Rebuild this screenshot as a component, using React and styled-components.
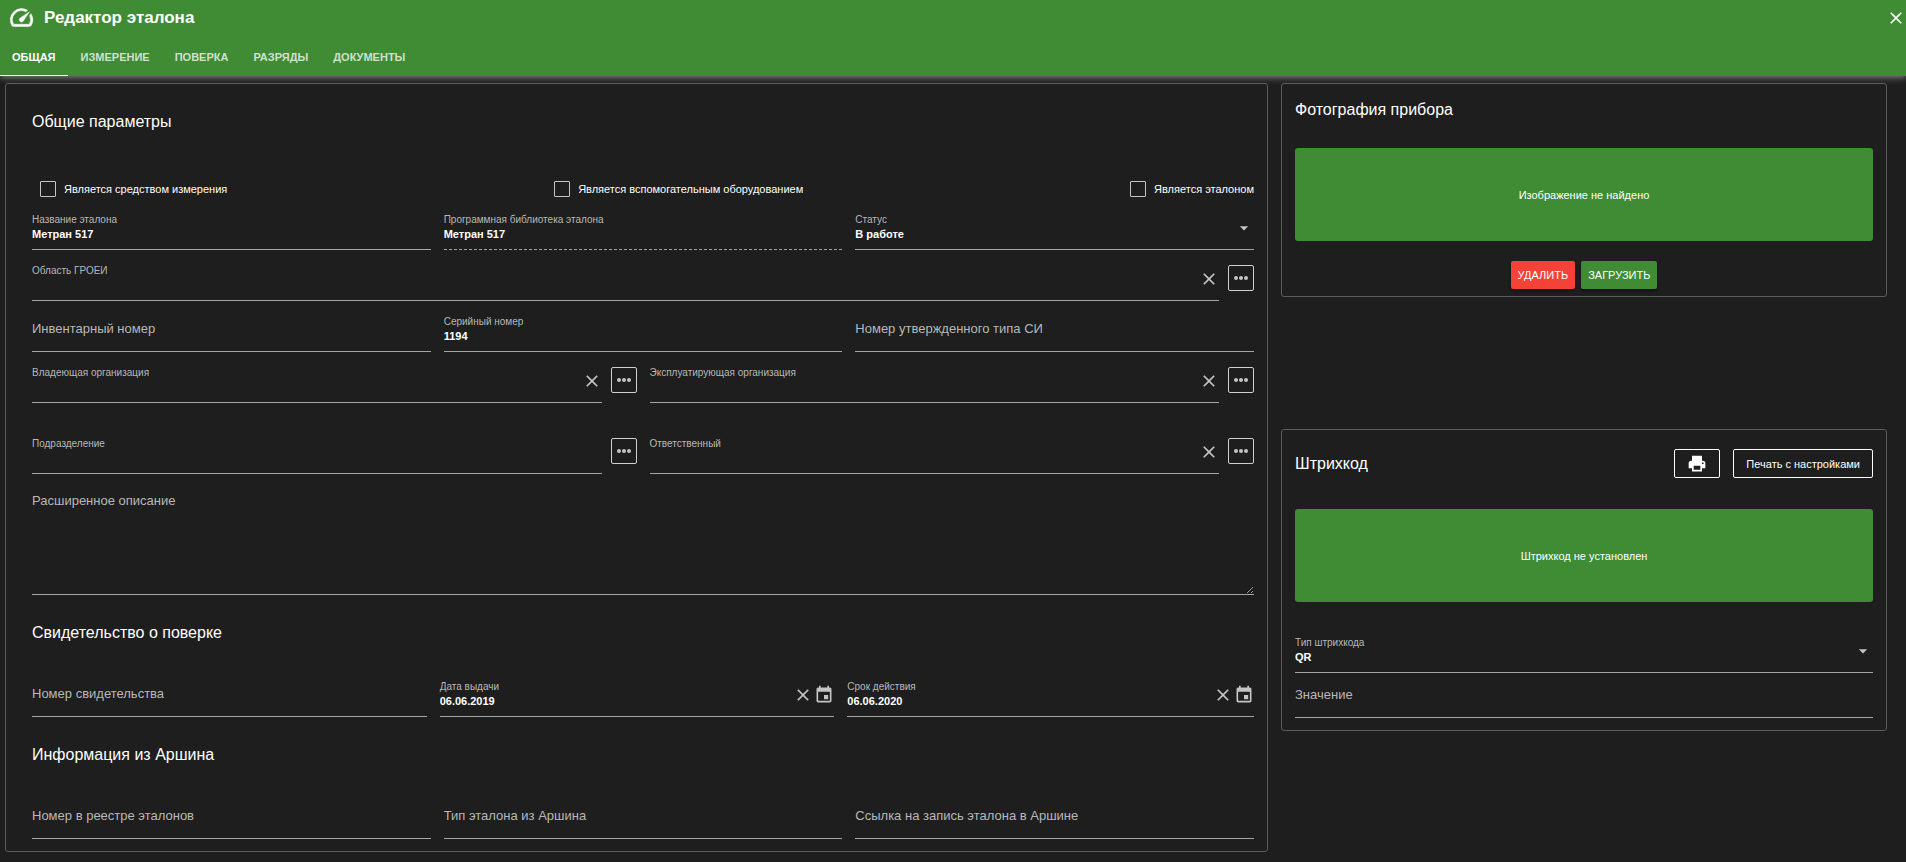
import React from 'react';
import styled, { createGlobalStyle, css } from 'styled-components';
import { MdArrowDropDown, MdClose, MdEvent } from 'react-icons/md';

const GlobalStyle = createGlobalStyle`
  *, *::before, *::after {
    box-sizing: border-box;
  }

  body {
    margin: 0;
    background: #1e1e1e;
    color: #fff;
    font-family: 'Liberation Sans', Arial, sans-serif;
    font-size: 11px;
  }

  button, input, select, textarea {
    font: inherit;
    color: inherit;
  }
`;

const Header = styled.header`
  position: relative;
  background: #3f8c35;
  box-shadow:
    0 2px 4px -1px rgba(255, 255, 255, 0.2),
    0 4px 5px 0 rgba(255, 255, 255, 0.14),
    0 1px 10px 0 rgba(255, 255, 255, 0.12);
`;

const TitleBar = styled.div`
  display: flex;
  align-items: center;
  gap: 9px;
  height: 38px;
  padding: 0 0 3px 8px;
`;

const Title = styled.h1`
  flex: 1;
  margin: 0;
  font-size: 17px;
  font-weight: 700;
`;

const IconButton = styled.button`
  display: flex;
  padding: 0;
  border: 0;
  background: none;
  color: ${(props) => props.$color || '#c4c4c4'};
  cursor: pointer;
`;

const Tabs = styled.nav`
  display: flex;
  gap: 1px;
`;

const Tab = styled.button`
  height: 38px;
  padding: 0 12px;
  border: 0;
  border-bottom: 1px solid ${(props) => (props.$active ? '#fff' : 'transparent')};
  background: none;
  color: ${(props) => (props.$active ? '#fff' : 'rgba(255, 255, 255, 0.75)')};
  font-weight: 700;
  text-transform: uppercase;
  cursor: pointer;
`;

const Content = styled.main`
  display: grid;
  grid-template-columns: 1263fr 606fr;
  align-items: start;
  gap: 13px;
  padding: 7px 19px 9px 5px;
`;

const Card = styled.section`
  border: 1px solid #5c5c5c;
  border-radius: 3px;
  padding: ${(props) => props.$padding};
`;

const Sidebar = styled.div`
  display: flex;
  flex-direction: column;
  gap: 132px;
`;

const Heading = styled.h2`
  margin: ${(props) => props.$margin || '0'};
  font-size: 16px;
  font-weight: 400;
  line-height: 24px;
`;

const Checks = styled.div`
  display: flex;
  justify-content: space-between;
  margin-bottom: 17px;
`;

const CheckLabel = styled.label`
  display: flex;
  align-items: center;
  gap: 8px;
  padding-left: 8px;
  line-height: 16px;
`;

const CheckBox = styled.input`
  appearance: none;
  width: 16px;
  height: 16px;
  margin: 0;
  border: 1px solid #c4c4c4;
  border-radius: 1px;
`;

const Rows = styled.div`
  display: flex;
  flex-direction: column;
  gap: 15px;
`;

const Row = styled.div`
  display: grid;
  grid-template-columns: ${(props) => props.$columns || '1fr'};
  gap: 9px 13px;
  margin-top: ${(props) => props.$offset || '0'};
`;

const Lookup = styled.div`
  display: flex;
  align-items: flex-start;
  gap: 9px;
`;

const FieldBox = styled.div`
  display: grid;
  flex: 1;
  min-width: 0;
  margin-top: ${(props) => props.$offset || '0'};

  > * {
    grid-area: 1 / 1;
  }
`;

const FieldLabel = styled.label`
  align-self: start;
  justify-self: start;
  color: #b8b8b8;
  pointer-events: none;
  ${(props) =>
    props.$raised
      ? css`
          font-size: 10px;
          line-height: 12px;
        `
      : css`
          padding-top: 2px;
          font-size: 13px;
          line-height: 22px;
        `}
`;

const control = css`
  width: 100%;
  height: 36px;
  margin: 0;
  padding: 12px 0 7px;
  border: 0;
  border-bottom: 1px ${(props) => (props.$dashed ? 'dashed' : 'solid')} #a6a6a6;
  border-radius: 0;
  outline: 0;
  background: none;
  font-weight: 700;
  line-height: 16px;
`;

const Input = styled.input`
  ${control}
`;

const Select = styled.select`
  ${control}
  appearance: none;

  option {
    background: #1e1e1e;
  }
`;

const TextArea = styled.textarea`
  ${control}
  display: block;
  height: 107px;
  padding-top: 26px;
  resize: vertical;
`;

const FieldIcons = styled.div`
  display: flex;
  align-self: start;
  justify-self: end;
  gap: 1px;
  padding-top: 4px;
  color: #c4c4c4;
  pointer-events: ${(props) => (props.$passive ? 'none' : 'auto')};
`;

const MoreButton = styled.button`
  display: flex;
  align-items: center;
  justify-content: center;
  width: 26px;
  height: 26px;
  padding: 0;
  border: 1px solid #d0d0d0;
  border-radius: 2px;
  background: none;
  color: #c4c4c4;
  cursor: pointer;
`;

const Placeholder = styled.div`
  display: flex;
  align-items: center;
  justify-content: center;
  height: 93px;
  border-radius: 3px;
  background: #3f8c35;
`;

const Actions = styled.div`
  display: flex;
  justify-content: center;
  gap: ${(props) => props.$gap || '6px'};
`;

const FilledButton = styled.button`
  height: 28px;
  padding: 0 7px;
  border: 0;
  border-radius: 2px;
  background: ${(props) => props.$color};
  box-shadow: 0 2px 3px rgba(0, 0, 0, 0.4);
  text-transform: uppercase;
  cursor: pointer;
`;

const OutlinedButton = styled.button`
  display: flex;
  align-items: center;
  height: 29px;
  padding: 0 12px;
  border: 1px solid #fff;
  border-radius: 2px;
  background: none;
  cursor: pointer;
`;

const CardHeader = styled.div`
  display: flex;
  align-items: center;
  justify-content: space-between;
  margin-bottom: 31px;
`;

const GaugeIcon = () => (
  <svg
    width="27"
    height="27"
    viewBox="0 0 24 24"
    fill="currentColor"
    stroke="currentColor"
    strokeWidth="0.4"
    aria-hidden="true"
  >
    <path d="m20.38 8.57-1.23 1.85a8 8 0 0 1-.22 7.58H5.07A8 8 0 0 1 15.58 6.85l1.85-1.23A10 10 0 0 0 3.35 19a2 2 0 0 0 1.72 1h13.85a2 2 0 0 0 1.74-1 10 10 0 0 0-.27-10.44z" />
    <path d="M10.59 15.41a2 2 0 0 0 2.83 0l5.66-8.49-8.49 5.66a2 2 0 0 0 0 2.83z" />
  </svg>
);

const MoreIcon = () => (
  <svg width="20" height="20" viewBox="0 0 20 20" fill="currentColor" aria-hidden="true">
    <circle cx="5" cy="10" r="2" />
    <circle cx="10" cy="10" r="2" />
    <circle cx="15" cy="10" r="2" />
  </svg>
);

const PrinterIcon = () => (
  <svg width="20" height="20" viewBox="0 0 24 24" fill="currentColor" aria-hidden="true">
    <path
      fillRule="evenodd"
      d="M6 2h12v6h1a3 3 0 0 1 3 3v6h-4v4H6v-4H2v-6a3 3 0 0 1 3-3h1V2zm2 12v5h8v-5H8zm10-3a1 1 0 1 0 2 0 1 1 0 0 0-2 0z"
    />
  </svg>
);

const Field = ({ id, label, value, raised, dashed, clearable, date }) => (
  <FieldBox>
    <Input id={id} defaultValue={value} $dashed={dashed} readOnly={dashed} />
    <FieldLabel htmlFor={id} $raised={raised || Boolean(value)}>
      {label}
    </FieldLabel>
    {(clearable || date) && (
      <FieldIcons>
        <IconButton type="button" aria-label="Очистить">
          <MdClose size={20} />
        </IconButton>
        {date && (
          <IconButton type="button" aria-label="Открыть календарь">
            <MdEvent size={20} />
          </IconButton>
        )}
      </FieldIcons>
    )}
  </FieldBox>
);

const LookupField = (props) => (
  <Lookup>
    <Field raised {...props} />
    <MoreButton type="button" aria-label="Выбрать">
      <MoreIcon />
    </MoreButton>
  </Lookup>
);

const SelectField = ({ id, label, options }) => (
  <FieldBox>
    <Select id={id}>
      {options.map((option) => (
        <option key={option}>{option}</option>
      ))}
    </Select>
    <FieldLabel htmlFor={id} $raised>
      {label}
    </FieldLabel>
    <FieldIcons $passive>
      <MdArrowDropDown size={20} />
    </FieldIcons>
  </FieldBox>
);

const Check = ({ id, children }) => (
  <CheckLabel htmlFor={id}>
    <CheckBox id={id} type="checkbox" />
    {children}
  </CheckLabel>
);

const tabs = ['Общая', 'Измерение', 'Поверка', 'Разряды', 'Документы'];

const App = () => (
  <>
    <GlobalStyle />
    <Header>
      <TitleBar>
        <GaugeIcon />
        <Title>Редактор эталона</Title>
        <IconButton type="button" aria-label="Закрыть" $color="#fff">
          <MdClose size={20} />
        </IconButton>
      </TitleBar>
      <Tabs>
        {tabs.map((tab, index) => (
          <Tab key={tab} type="button" $active={index === 0}>
            {tab}
          </Tab>
        ))}
      </Tabs>
    </Header>
    <Content>
      <Card $padding="26px 13px 12px 26px">
        <Heading $margin="0 0 47px">Общие параметры</Heading>
        <Checks>
          <Check id="measuring">Является средством измерения</Check>
          <Check id="auxiliary">Является вспомогательным оборудованием</Check>
          <Check id="standard">Является эталоном</Check>
        </Checks>
        <Rows>
          <Row $columns="repeat(3, 1fr)">
            <Field id="name" label="Название эталона" value="Метран 517" />
            <Field id="library" label="Программная библиотека эталона" value="Метран 517" dashed />
            <SelectField id="status" label="Статус" options={['В работе']} />
          </Row>
          <LookupField id="area" label="Область ГРОЕИ" clearable />
          <Row $columns="repeat(3, 1fr)">
            <Field id="inventory" label="Инвентарный номер" />
            <Field id="serial" label="Серийный номер" value="1194" />
            <Field id="type-number" label="Номер утвержденного типа СИ" />
          </Row>
          <Row $columns="repeat(2, 1fr)">
            <LookupField id="owner" label="Владеющая организация" clearable />
            <LookupField id="operator" label="Эксплуатирующая организация" clearable />
          </Row>
          <Row $columns="repeat(2, 1fr)" $offset="20px">
            <LookupField id="department" label="Подразделение" />
            <LookupField id="responsible" label="Ответственный" clearable />
          </Row>
        </Rows>
        <FieldBox $offset="14px">
          <TextArea id="description" />
          <FieldLabel htmlFor="description">Расширенное описание</FieldLabel>
        </FieldBox>
        <Heading $margin="26px 0 36px">Свидетельство о поверке</Heading>
        <Row $columns="395fr 395fr 407fr">
          <Field id="certificate" label="Номер свидетельства" />
          <Field id="issued" label="Дата выдачи" value="06.06.2019" date />
          <Field id="expires" label="Срок действия" value="06.06.2020" date />
        </Row>
        <Heading $margin="26px 0 36px">Информация из Аршина</Heading>
        <Row $columns="repeat(3, 1fr)">
          <Field id="registry" label="Номер в реестре эталонов" />
          <Field id="arshin-type" label="Тип эталона из Аршина" />
          <Field id="arshin-link" label="Ссылка на запись эталона в Аршине" />
        </Row>
      </Card>
      <Sidebar>
        <Card $padding="14px 13px 7px">
          <Heading $margin="0 0 26px">Фотография прибора</Heading>
          <Placeholder>Изображение не найдено</Placeholder>
          <Row $offset="20px">
            <Actions>
              <FilledButton type="button" $color="#f44336">
                Удалить
              </FilledButton>
              <FilledButton type="button" $color="#3f8c35">
                Загрузить
              </FilledButton>
            </Actions>
          </Row>
        </Card>
        <Card $padding="19px 13px 12px">
          <CardHeader>
            <Heading>Штрихкод</Heading>
            <Actions $gap="13px">
              <OutlinedButton type="button" aria-label="Печать">
                <PrinterIcon />
              </OutlinedButton>
              <OutlinedButton type="button">Печать с настройками</OutlinedButton>
            </Actions>
          </CardHeader>
          <Placeholder>Штрихкод не установлен</Placeholder>
          <Row $offset="35px">
            <SelectField id="barcode-type" label="Тип штрихкода" options={['QR']} />
            <Field id="barcode-value" label="Значение" />
          </Row>
        </Card>
      </Sidebar>
    </Content>
  </>
);

export default App;
